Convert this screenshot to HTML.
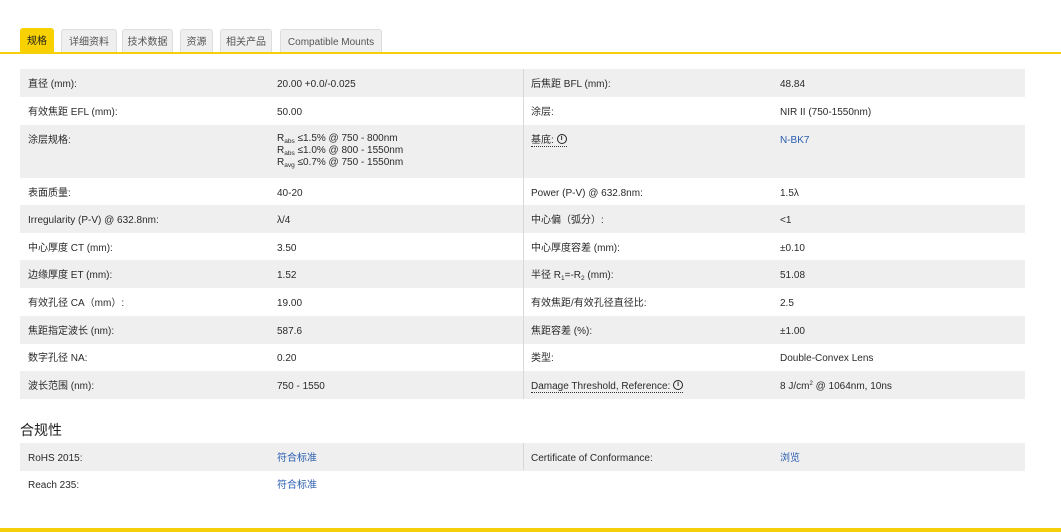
<!DOCTYPE html>
<html><head><meta charset="utf-8"><style>
*{margin:0;padding:0;box-sizing:border-box}
body{width:1061px;height:532px;position:relative;background:#fff;font-family:"Liberation Sans","Noto Sans CJK SC",sans-serif;font-size:10px;color:#2a2a2a;overflow:hidden}
.tab{position:absolute;top:29px;height:24px;background:#efefef;border:1px solid #ddd;border-bottom:none;border-radius:3px 3px 0 0;font-size:10px;color:#555;line-height:26px;text-align:center;white-space:nowrap}
.tab.a{background:#f7d100;border-color:#f7d100;color:#222;top:28px;height:25px}
.yl{position:absolute;left:0;top:52px;width:1061px;height:2px;background:#f5cf0a}
.row{position:absolute;left:20px;width:1005px;height:28px}
.g{background:#efefef}
.row>span{position:absolute;top:10px;white-space:nowrap;line-height:12px;height:12px}
.c1{left:8px}.c2{left:257px}.c3{left:511px}.c4{left:760px}
.div{position:absolute;left:523px;width:1px;background:#d8d8d8}
.lk{color:#2a5db0}
.dot{border-bottom:1px dotted #333;display:inline-block;line-height:11px}
.i{display:inline-block;width:10px;height:10px;border:1.3px solid #222;border-radius:50%;font-size:7px;line-height:7px;text-align:center;font-weight:bold;vertical-align:middle;position:relative;top:-1px}
sub{font-size:6.5px;vertical-align:-2px;line-height:0}
sup{font-size:6px;vertical-align:4px;line-height:0}
h3{position:absolute;left:20px;top:421px;font-size:14px;font-weight:normal;color:#222;line-height:18px}
.bot{position:absolute;left:0;top:528px;width:1061px;height:4px;background:#f5cf0a}
</style></head><body>
<div class="tab a" style="left:20px;width:34px">规格</div>
<div class="tab" style="left:61px;width:56px">详细资料</div>
<div class="tab" style="left:122px;width:51px">技术数据</div>
<div class="tab" style="left:180px;width:33px">资源</div>
<div class="tab" style="left:220px;width:52px">相关产品</div>
<div class="tab" style="left:280px;width:102px">Compatible Mounts</div>
<div class="yl"></div>

<div class="row g" style="top:69px"><span class="c1">直径 (mm):</span><span class="c2">20.00 +0.0/-0.025</span><span class="c3">后焦距 BFL (mm):</span><span class="c4">48.84</span></div>
<div class="row" style="top:97px"><span class="c1">有效焦距 EFL (mm):</span><span class="c2">50.00</span><span class="c3">涂层:</span><span class="c4">NIR II (750-1550nm)</span></div>
<div class="row g" style="top:125px;height:53px"><span class="c1">涂层规格:</span><span class="c2" style="line-height:12px;top:8px;height:36px">R<sub>abs</sub> ≤1.5% @ 750 - 800nm<br>R<sub>abs</sub> ≤1.0% @ 800 - 1550nm<br>R<sub>avg</sub> ≤0.7% @ 750 - 1550nm</span><span class="c3"><span class="dot">基底: <span class="i">i</span></span></span><span class="c4 lk">N-BK7</span></div>
<div class="row" style="top:178px"><span class="c1">表面质量:</span><span class="c2">40-20</span><span class="c3">Power (P-V) @ 632.8nm:</span><span class="c4">1.5λ</span></div>
<div class="row g" style="top:205px"><span class="c1">Irregularity (P-V) @ 632.8nm:</span><span class="c2">λ/4</span><span class="c3">中心偏（弧分）:</span><span class="c4">&lt;1</span></div>
<div class="row" style="top:233px"><span class="c1">中心厚度 CT (mm):</span><span class="c2">3.50</span><span class="c3">中心厚度容差 (mm):</span><span class="c4">±0.10</span></div>
<div class="row g" style="top:260px"><span class="c1">边缘厚度 ET (mm):</span><span class="c2">1.52</span><span class="c3">半径 R<sub>1</sub>=-R<sub>2</sub> (mm):</span><span class="c4">51.08</span></div>
<div class="row" style="top:288px"><span class="c1">有效孔径 CA（mm）:</span><span class="c2">19.00</span><span class="c3">有效焦距/有效孔径直径比:</span><span class="c4">2.5</span></div>
<div class="row g" style="top:316px"><span class="c1">焦距指定波长 (nm):</span><span class="c2">587.6</span><span class="c3">焦距容差 (%):</span><span class="c4">±1.00</span></div>
<div class="row" style="top:343px"><span class="c1">数字孔径 NA:</span><span class="c2">0.20</span><span class="c3">类型:</span><span class="c4">Double-Convex Lens</span></div>
<div class="row g" style="top:371px"><span class="c1">波长范围 (nm):</span><span class="c2">750 - 1550</span><span class="c3"><span class="dot">Damage Threshold, Reference: <span class="i">i</span></span></span><span class="c4">8 J/cm<sup>2</sup> @ 1064nm, 10ns</span></div>
<div class="div" style="top:69px;height:330px"></div>

<h3>合规性</h3>
<div class="row g" style="top:443px"><span class="c1">RoHS 2015:</span><span class="c2 lk">符合标准</span><span class="c3">Certificate of Conformance:</span><span class="c4 lk">浏览</span></div>
<div class="row" style="top:470px"><span class="c1">Reach 235:</span><span class="c2 lk">符合标准</span></div>
<div class="div" style="top:443px;height:27px"></div>
<div class="bot"></div>
</body></html>
